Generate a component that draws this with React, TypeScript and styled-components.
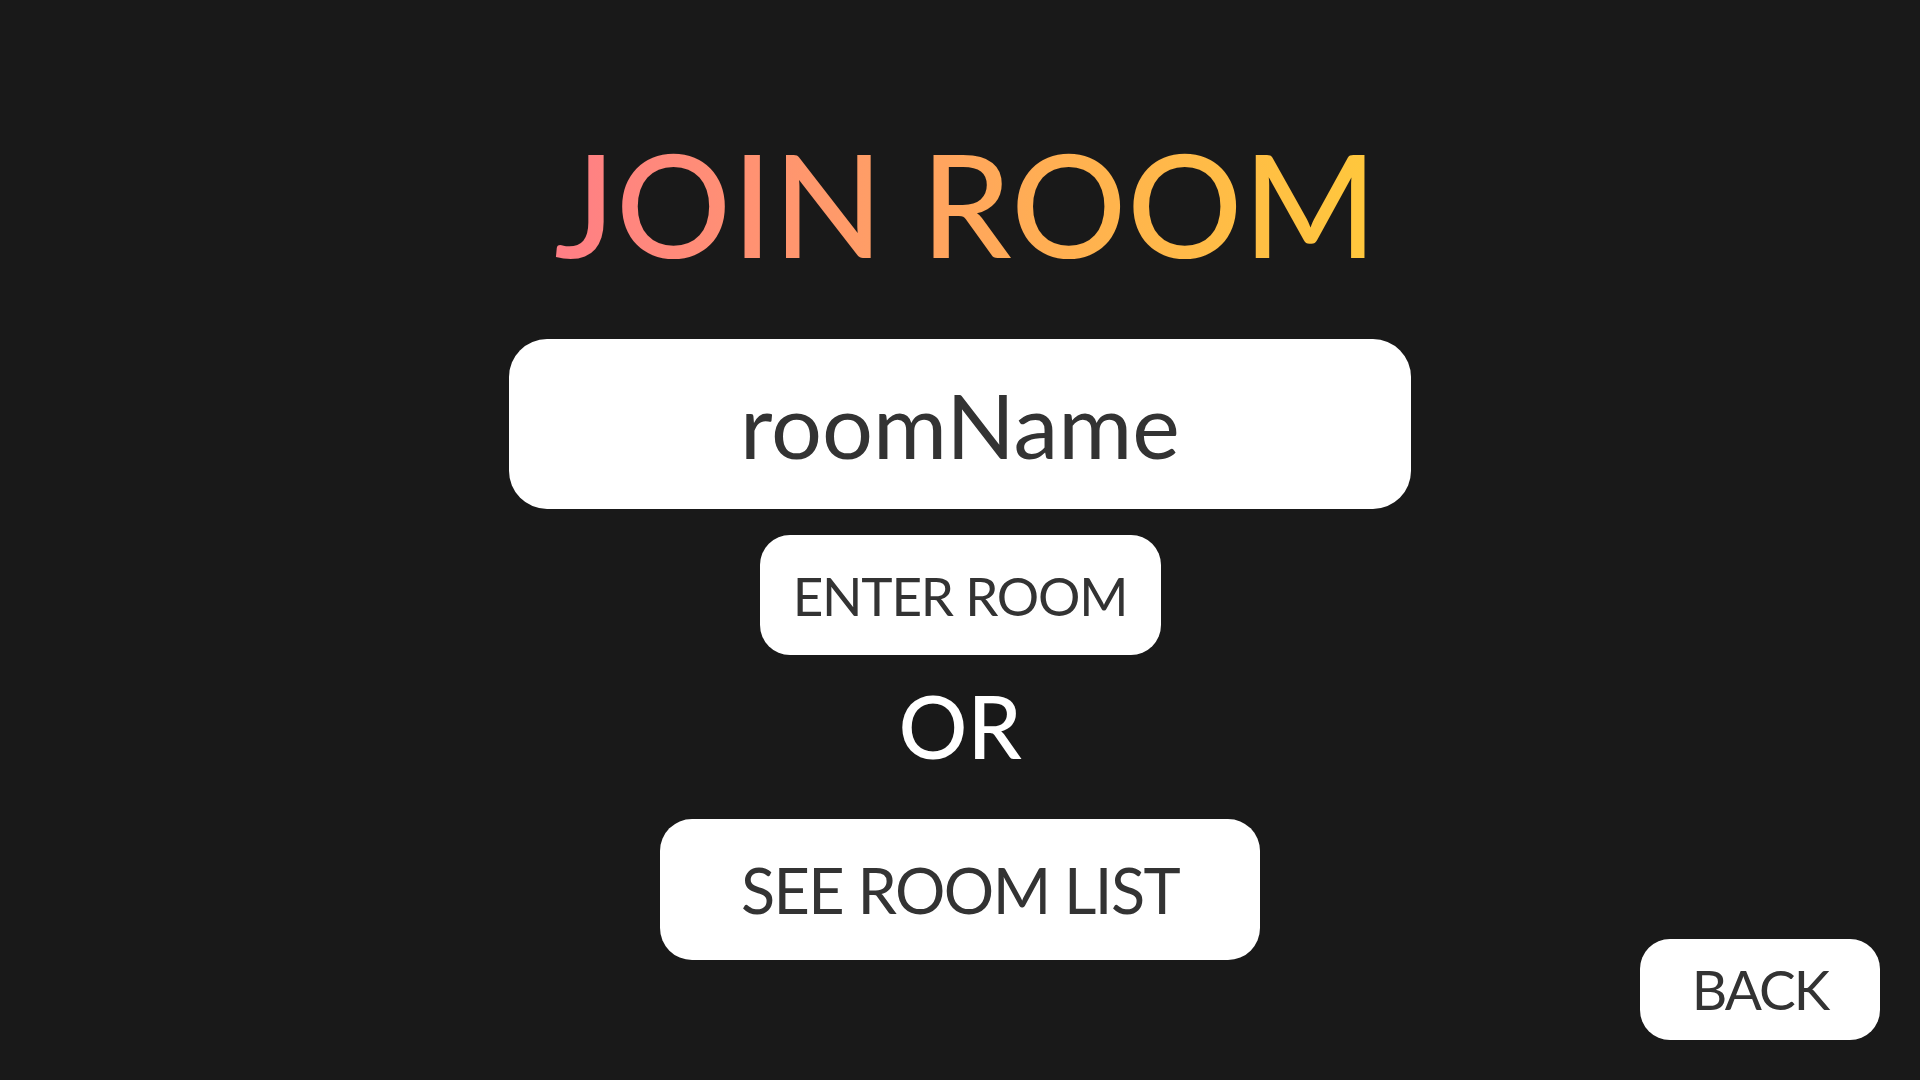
import React from "react";
import styled, { createGlobalStyle } from "styled-components";

const Global = createGlobalStyle`
  html, body {
    margin: 0;
    padding: 0;
    background: #191919;
    height: 100%;
  }
  #root { min-height: 100vh; }
  * { box-sizing: border-box; }
`;

const Page = styled.div`
  min-height: 100vh;
  background: #191919;
  font-family: "Lato", "Noto Sans", sans-serif;
  display: flex;
  flex-direction: column;
  align-items: center;
  padding-top: 131px;
`;

const Title = styled.h1`
  margin: 0;
  font-size: 144px;
  line-height: 1;
  font-weight: 500;
  letter-spacing: 0.5px;
  padding-left: 12px;
  background: linear-gradient(90deg, #ff7d87 0%, #ff9a6a 35%, #ffb24f 65%, #ffc83c 100%);
  -webkit-background-clip: text;
  background-clip: text;
  color: transparent;
`;

const NameInput = styled.input`
  margin-top: 64px;
  width: 902px;
  height: 170px;
  border: none;
  outline: none;
  border-radius: 38px;
  background: #ffffff;
  text-align: center;
  font-family: inherit;
  font-size: 90px;
  color: #333333;
  &::placeholder {
    color: #333333;
    opacity: 1;
  }
`;

const Button = styled.button<{ $w: number; $h: number; $size: number; $r: number; $ls: number }>`
  width: ${(p) => p.$w}px;
  height: ${(p) => p.$h}px;
  border: none;
  border-radius: ${(p) => p.$r}px;
  background: #ffffff;
  color: #333333;
  font-family: inherit;
  font-size: ${(p) => p.$size}px;
  line-height: 1;
  letter-spacing: ${(p) => p.$ls}px;
  display: flex;
  align-items: center;
  justify-content: center;
  padding: 0;
  cursor: pointer;
`;

const EnterButton = styled(Button)`
  margin-top: 26px;
`;

const Or = styled.div`
  margin-top: 28px;
  color: #ffffff;
  font-size: 86px;
  line-height: 1;
  font-weight: 500;
`;

const ListButton = styled(Button)`
  margin-top: 50px;
`;

const BackButton = styled(Button)`
  position: fixed;
  right: 40px;
  bottom: 40px;
`;

export default function App() {
  return (
    <>
      <Global />
      <Page>
        <Title>JOIN ROOM</Title>
        <NameInput placeholder="roomName" />
        <EnterButton $w={401} $h={120} $size={53} $r={30} $ls={-1.2}>
          ENTER ROOM
        </EnterButton>
        <Or>OR</Or>
        <ListButton $w={600} $h={141} $size={63} $r={32} $ls={-1.6}>
          SEE ROOM LIST
        </ListButton>
        <BackButton $w={240} $h={101} $size={55} $r={30} $ls={-2}>
          BACK
        </BackButton>
      </Page>
    </>
  );
}
